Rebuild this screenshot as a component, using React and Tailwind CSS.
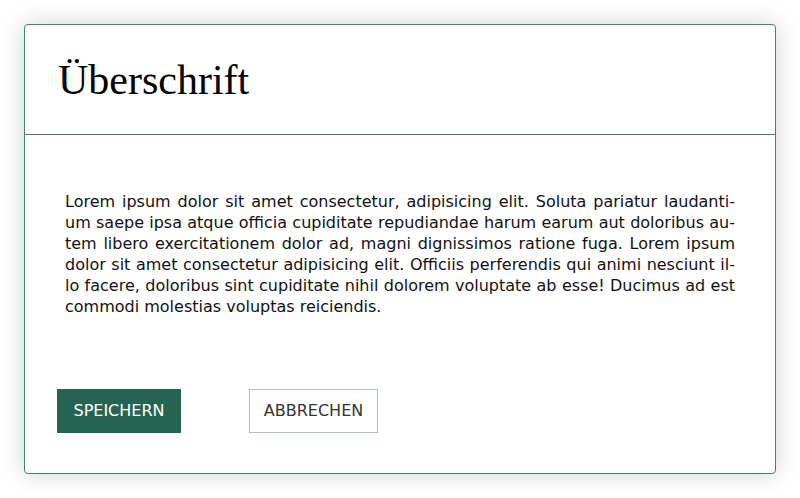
export default function App() {
  return (
    <div className="w-[800px] h-[498px] bg-white p-6" style={{ fontFamily: 'Verdana, "DejaVu Sans", sans-serif' }}>
      <div className="h-[450px] flex flex-col border border-[#4a7f6f] rounded-[4px] bg-white shadow-[0_0_24px_rgba(0,0,0,0.18)]">
        {/* Header */}
        <div className="h-[110px] flex items-center px-[33px] border-b border-[#4a7f6f]">
          <h1 className="text-[42px] leading-none text-black" style={{ fontFamily: '"Liberation Serif", "DejaVu Serif", serif' }}>
            Überschrift
          </h1>
        </div>

        {/* Body */}
        <div className="flex-1 px-[40px] pt-[56px]">
          <p lang="de" className="text-[16px] leading-[21px] text-[#111] text-justify hyphens-manual">
            Lorem ipsum dolor sit amet consectetur, adipisicing elit. Soluta pariatur laudanti&shy;um saepe ipsa atque officia cupiditate repudiandae harum earum aut doloribus au&shy;tem libero exercitationem dolor ad, magni dignissimos ratione fuga. Lorem ipsum dolor sit amet consectetur adipisicing elit. Officiis perferendis qui animi nesciunt il&shy;lo facere, doloribus sint cupiditate nihil dolorem voluptate ab esse! Ducimus ad est commodi molestias voluptas reiciendis.
          </p>
        </div>

        {/* Footer */}
        <div className="flex items-center gap-[68px] px-[32px] pb-[40px]">
          <button className="h-[44px] w-[124px] bg-[#256450] text-white text-[16px] uppercase">
            Speichern
          </button>
          <button className="h-[44px] w-[129px] bg-white border border-[#a9c4bc] text-[#333] text-[16px] uppercase">
            Abbrechen
          </button>
        </div>
      </div>
    </div>
  );
}
